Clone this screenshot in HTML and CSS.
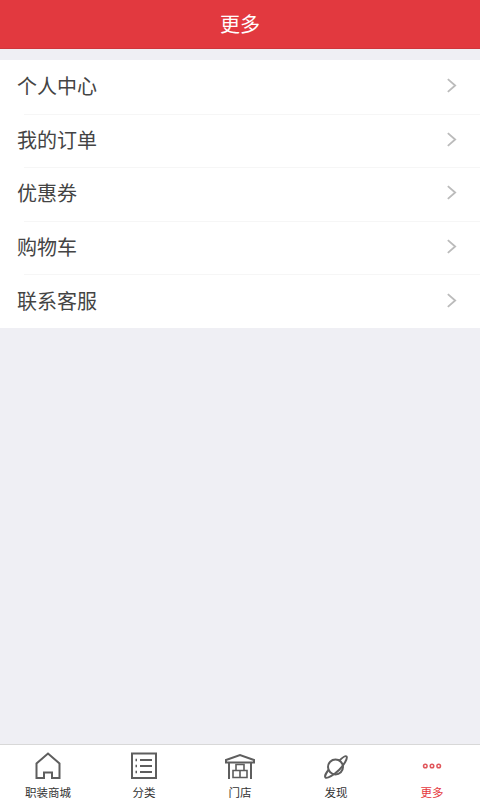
FILE: index.html
```html
<!DOCTYPE html>
<html lang="zh-CN">
<head>
    <meta charset="UTF-8">
    <meta name="viewport" content="width=device-width, initial-scale=1.0">
    <title>更多</title>
    <link rel="stylesheet" href="styles.css">
</head>
<body>
    <div class="page">
        <div class="header">更多</div>

        <div class="menu">
            <div class="menu-item">
                <span class="menu-text">个人中心</span>
                <svg class="arrow" viewBox="0 0 12 18"><path d="M2 2l8 7-8 7"/></svg>
            </div>
            <div class="menu-item">
                <span class="menu-text">我的订单</span>
                <svg class="arrow" viewBox="0 0 12 18"><path d="M2 2l8 7-8 7"/></svg>
            </div>
            <div class="menu-item">
                <span class="menu-text">优惠券</span>
                <svg class="arrow" viewBox="0 0 12 18"><path d="M2 2l8 7-8 7"/></svg>
            </div>
            <div class="menu-item">
                <span class="menu-text">购物车</span>
                <svg class="arrow" viewBox="0 0 12 18"><path d="M2 2l8 7-8 7"/></svg>
            </div>
            <div class="menu-item">
                <span class="menu-text">联系客服</span>
                <svg class="arrow" viewBox="0 0 12 18"><path d="M2 2l8 7-8 7"/></svg>
            </div>
        </div>

        <div class="spacer"></div>

        <!-- 底部导航 -->
        <div class="tabbar">
            <div class="tab">
                <svg class="tab-icon" viewBox="0 0 30 30">
                    <path d="M3.500 26V11.500L15 1.500 26.500 11.500V26H19V20.500H11V26Z"/>
                </svg>
                <span class="tab-label">职装商城</span>
            </div>
            <div class="tab">
                <svg class="tab-icon" viewBox="0 0 30 30">
                    <path d="M3 1.500H27V26H3Z"/>
                    <path d="M11 8H23M11 14H23M11 20H23"/>
                    <path class="dots" d="M6.500 8H8M6.500 14H8M6.500 20H8"/>
                </svg>
                <span class="tab-label">分类</span>
            </div>
            <div class="tab">
                <svg class="tab-icon" viewBox="0 0 30 30">
                    <path d="M1 10.500V8L15 3 29 8V10.500Z"/>
                    <path d="M4 27V10.500M26 27V10.500"/>
                    <path class="thin" d="M11 12.500H19V18.500H11ZM8 18.500H15V25.500H8ZM15 18.500H22V25.500H15Z"/>
                </svg>
                <span class="tab-label">门店</span>
            </div>
            <div class="tab">
                <svg class="tab-icon" viewBox="0 0 30 30">
                    <circle cx="14.500" cy="15" r="7.500"/>
                    <path d="M18.500 8.500C21.500 5.500 24.500 3.500 25.500 4.500 27 6 23 13 18 18 13 23 6 27 4.500 25.500 3.500 24.500 5 21 7.500 18"/>
                </svg>
                <span class="tab-label">发现</span>
            </div>
            <div class="tab tab-active">
                <svg class="tab-icon" viewBox="0 0 30 30">
                    <circle cx="8.300" cy="14" r="1.800"/>
                    <circle cx="15" cy="14" r="1.800"/>
                    <circle cx="21.700" cy="14" r="1.800"/>
                </svg>
                <span class="tab-label">更多</span>
            </div>
        </div>
    </div>
</body>
</html>
```

FILE: styles.css
```css
* {
    margin: 0;
    padding: 0;
    box-sizing: border-box;
    font-family: "Noto Sans CJK SC", "Liberation Sans", sans-serif;
}

body {
    background: #efeff4;
}

.page {
    display: flex;
    flex-direction: column;
    height: 800px;
}

/* 标题栏 */
.header {
    height: 49px;
    line-height: 47px;
    flex-shrink: 0;
    background: #e2393f;
    border-bottom: 1px solid #cf363c;
    color: #fff;
    font-size: 20px;
    text-align: center;
}

/* 菜单 */
.menu {
    margin-top: 11px;
    background: #fff;
}
.menu-item {
    display: flex;
    align-items: center;
    justify-content: space-between;
    height: 53.600px;
    padding: 0 23px 2px 17px;
    position: relative;
}
.menu-item + .menu-item::before {
    content: "";
    position: absolute;
    top: 0;
    left: 24px;
    right: 0;
    height: 1px;
    background: #f6f6f6;
}
.menu-text {
    font-size: 20px;
    color: #444;
}
.arrow {
    width: 11px;
    height: 17px;
    fill: none;
    stroke: #bbb;
    stroke-width: 2;
}

.spacer {
    flex: 1;
}

/* 底部导航 */
.tabbar {
    display: flex;
    height: 56px;
    flex-shrink: 0;
    background: #fff;
    border-top: 1px solid #d8d8d8;
}
.tab {
    flex: 1;
    display: flex;
    flex-direction: column;
    align-items: center;
    padding-top: 7px;
    gap: 2px;
}
.tab-icon {
    width: 30px;
    height: 30px;
    fill: none;
    stroke: #5e5e5e;
    stroke-width: 2;
}
.tab-icon .dots {
    stroke-width: 2.500;
}
.tab-icon .thin {
    stroke-width: 1.600;
}
.tab-label {
    font-size: 11.500px;
    line-height: 16px;
    color: #333;
}
.tab-active .tab-icon {
    stroke: #e0565b;
    stroke-width: 1.500;
}
.tab-active .tab-label {
    color: #e53a40;
}
```
